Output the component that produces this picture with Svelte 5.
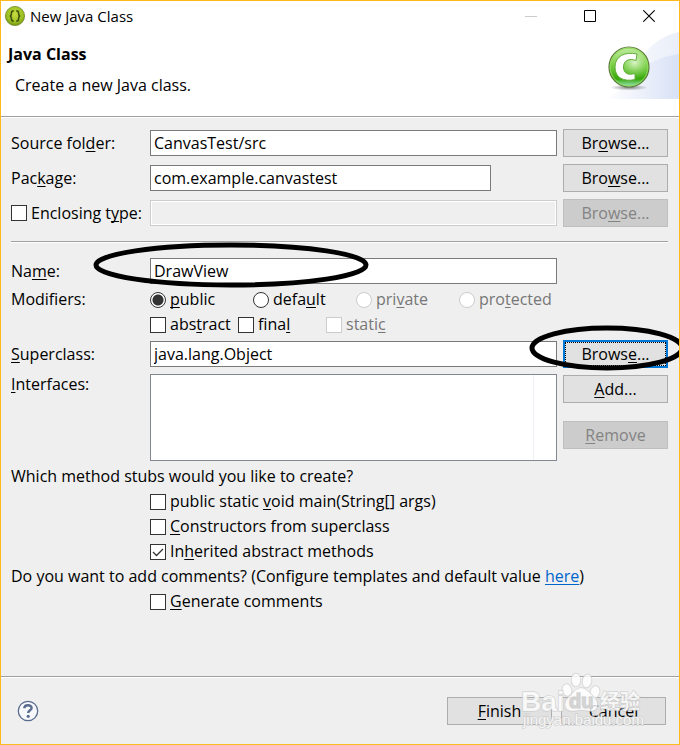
<script lang="ts">
	let name = $state('DrawView');
	let sourceFolder = $state('CanvasTest/src');
	let packageName = $state('com.example.canvastest');
	let superclass = $state('java.lang.Object');
	let access = $state('public');

	const accessModifiers = [
		{ value: 'public', label: '&public' },
		{ value: 'default', label: 'defa&ult' },
		{ value: 'private', label: 'pri&vate', disabled: true },
		{ value: 'protected', label: 'pro&tected', disabled: true }
	];

	let stubs = $state([
		{ id: 'main', label: 'public static &void main(String[] args)', checked: false },
		{ id: 'constructors', label: '&Constructors from superclass', checked: false },
		{ id: 'inherited', label: 'In&herited abstract methods', checked: true }
	]);
</script>

<!-- "&" marks the letter used as keyboard mnemonic -->
{#snippet mnemonic(text: string)}
	{@const at = text.indexOf('&')}
	{#if at < 0}{text}{:else}<span>{text.slice(0, at)}<u>{text[at + 1]}</u>{text.slice(at + 2)}</span>{/if}
{/snippet}

<div class="dialog">
	<div class="titlebar">
		<svg class="app-icon" viewBox="0 0 20 20" aria-hidden="true">
			<defs>
				<radialGradient id="app-green" cx="0.5" cy="0.4" r="0.6">
					<stop offset="0" stop-color="#c9dc40" />
					<stop offset="0.7" stop-color="#9cc022" />
					<stop offset="1" stop-color="#6c9014" />
				</radialGradient>
			</defs>
			<circle cx="10" cy="10" r="9.6" fill="url(#app-green)" stroke="#76882a" stroke-width="0.8" />
			<path
				d="M8.8 4.8C6.9 4.8 6.4 5.5 6.4 7.2S6 9.8 4.8 10c1.2.2 1.6 1.1 1.6 2.8s.5 2.4 2.4 2.4M11.2 4.8c1.9 0 2.4.7 2.4 2.4s.4 2.6 1.6 2.8c-1.2.2-1.6 1.1-1.6 2.8s-.5 2.4-2.4 2.4"
				fill="none"
				stroke="#3f5210"
				stroke-width="1.6"
			/>
		</svg>
		<span class="title">New Java Class</span>
		<div class="window-buttons">
			<button aria-label="Minimize" disabled>
				<svg viewBox="0 0 12 12"><path d="M0 6.5h12" stroke="#ccc" /></svg>
			</button>
			<button aria-label="Maximize">
				<svg viewBox="0 0 12 12"><path d="M.5.5h11v11H.5z" fill="none" stroke="#000" /></svg>
			</button>
			<button aria-label="Close">
				<svg viewBox="0 0 12 12"><path d="M.3.3l11.4 11.4M11.7.3L.3 11.7" stroke="#000" stroke-width="1.1" /></svg>
			</button>
		</div>
	</div>

	<header>
		<div class="heading">
			<h1>Java Class</h1>
			<p>Create a new Java class.</p>
		</div>
		<svg class="banner" viewBox="0 0 74 67" aria-hidden="true">
			<defs>
				<linearGradient id="swoosh">
					<stop offset="0" stop-color="#fff" />
					<stop offset="1" stop-color="#d8e1f5" />
				</linearGradient>
				<linearGradient id="swoosh-back">
					<stop offset="0" stop-color="#fff" />
					<stop offset="1" stop-color="#e9eef9" />
				</linearGradient>
				<linearGradient id="ball" x1="0" y1="0" x2="0" y2="1">
					<stop offset="0" stop-color="#c8eda8" />
					<stop offset="0.45" stop-color="#79cf45" />
					<stop offset="0.8" stop-color="#36a80b" />
					<stop offset="1" stop-color="#a5ead0" />
				</linearGradient>
				<radialGradient id="ball-light" cx="0.65" cy="0.38" r="0.45">
					<stop offset="0" stop-color="#e6f8d8" stop-opacity="0.9" />
					<stop offset="1" stop-color="#8bd85d" stop-opacity="0" />
				</radialGradient>
				<radialGradient id="shadow">
					<stop offset="0" stop-color="#555" stop-opacity="0.7" />
					<stop offset="1" stop-color="#555" stop-opacity="0" />
				</radialGradient>
			</defs>
			<path d="M0 67C30 58 28 10 74 0v67z" fill="url(#swoosh-back)" />
			<path d="M0 67C28 58 26 29 74 22v45z" fill="url(#swoosh)" />
			<ellipse cx="24" cy="55.5" rx="19" ry="3" fill="url(#shadow)" />
			<circle cx="24" cy="35" r="20" fill="url(#ball)" stroke="#5d7a3a" stroke-width="1.2" />
			<circle cx="24" cy="35" r="18.8" fill="url(#ball-light)" stroke="#8fdc5c" stroke-width="1" />
			<path
				d="M32 22l-1 6.500c-7-2.500-12.500 0-12.500 6.500s5 8.500 11.500 6.500v6c-11 2.500-20-1.500-20-12.500S20 19.500 32 22z"
				fill="#fff"
				stroke="#62ad3a"
				stroke-width="1"
			/>
		</svg>
	</header>

	<main>
		<div class="row">
			<label for="source">{@render mnemonic('Source fol&der:')}</label>
			<input id="source" type="text" bind:value={sourceFolder} />
			<button class="btn">{@render mnemonic('Br&owse...')}</button>
		</div>
		<div class="row">
			<label for="package">{@render mnemonic('Pac&kage:')}</label>
			<input id="package" class="short" type="text" bind:value={packageName} />
			<button class="btn">{@render mnemonic('Bro&wse...')}</button>
		</div>
		<div class="row">
			<label class="check"><input type="checkbox" />{@render mnemonic('Enclosing t&ype:')}</label>
			<input type="text" aria-label="Enclosing type" disabled />
			<button class="btn" disabled>{@render mnemonic('Bro&wse...')}</button>
		</div>

		<hr />

		<div class="row name-row">
			<label for="name">{@render mnemonic('Na&me:')}</label>
			<input id="name" type="text" bind:value={name} />
			<svg class="mark mark-name" viewBox="0 0 276 46" aria-hidden="true">
				<ellipse cx="138" cy="23" rx="135" ry="20" />
			</svg>
		</div>

		<div class="modifiers">
			<span class="caption">Modifiers:</span>
			<div class="options">
				<div class="access">
					{#each accessModifiers as mod}
						<label class="check" class:off={mod.disabled}>
							<input type="radio" name="access" value={mod.value} disabled={mod.disabled} bind:group={access} />{@render mnemonic(mod.label)}
						</label>
					{/each}
				</div>
				<div class="flags">
					<label class="check"><input type="checkbox" />{@render mnemonic('abs&tract')}</label>
					<label class="check"><input type="checkbox" />{@render mnemonic('fina&l')}</label>
					<label class="check off"><input type="checkbox" disabled />{@render mnemonic('stati&c')}</label>
				</div>
			</div>
		</div>

		<div class="row super-row">
			<label for="superclass">{@render mnemonic('&Superclass:')}</label>
			<input id="superclass" type="text" bind:value={superclass} />
			<button class="btn focused">{@render mnemonic('Brows&e...')}</button>
			<svg class="mark mark-super" viewBox="0 0 156 46" aria-hidden="true">
				<ellipse cx="78" cy="23" rx="75" ry="20" />
			</svg>
		</div>
		<div class="row list-row">
			<label for="interfaces">{@render mnemonic('&Interfaces:')}</label>
			<select id="interfaces" multiple></select>
			<div class="list-buttons">
				<button class="btn">{@render mnemonic('&Add...')}</button>
				<button class="btn" disabled>{@render mnemonic('&Remove')}</button>
			</div>
		</div>

		<p class="line">Which method stubs would you like to create?</p>
		{#each stubs as stub (stub.id)}
			<label class="check line indent">
				<input type="checkbox" bind:checked={stub.checked} />{@render mnemonic(stub.label)}
			</label>
		{/each}
		<p class="line">Do you want to add comments? (Configure templates and default value <a href="#templates">here</a>)</p>
		<label class="check line indent"><input type="checkbox" />{@render mnemonic('&Generate comments')}</label>
	</main>

	<footer>
		<button class="help" aria-label="Help">
			<svg viewBox="0 0 22 22">
				<circle cx="11" cy="11" r="9.7" fill="#f6f8fb" stroke="#5a6c8d" stroke-width="1.3" />
				<path d="M7.3 8.3C7.4 4.2 14.8 4.3 14.6 8c-.1 2.3-3.4 2.4-3.4 5" fill="none" stroke="#5a6c8d" stroke-width="2.4" />
				<circle cx="11.2" cy="16.3" r="1.6" fill="#5a6c8d" />
			</svg>
		</button>
		<button class="btn">{@render mnemonic('&Finish')}</button>
		<button class="btn">Cancel</button>
		<svg class="watermark" viewBox="0 0 126 60" aria-hidden="true">
			<g class="paw">
				<ellipse cx="46" cy="20" rx="4.5" ry="6" transform="rotate(-12 46 20)" />
				<ellipse cx="55" cy="10" rx="4.5" ry="6.5" />
				<ellipse cx="66" cy="11" rx="4.5" ry="6.5" transform="rotate(10 66 11)" />
				<ellipse cx="74" cy="22" rx="4.5" ry="6" transform="rotate(15 74 22)" />
				<path d="M60 18c-6 0-8 6-12 9-6 5-5 14 3 14 4 0 5-1 9-1s6 1 10 1c8 0 8-9 3-14-4-3-7-9-13-9z" />
			</g>
			<text class="brand" x="0" y="41">Bai</text>
			<text class="du" x="48" y="38">du</text>
			<text class="cn" x="79" y="39">经验</text>
			<text class="url" x="2" y="55">jingyan.baidu.com</text>
		</svg>
	</footer>
</div>

<style>
	:global(body) {
		margin: 0;
	}

	.dialog {
		position: relative;
		box-sizing: border-box;
		min-height: 100vh;
		display: flex;
		flex-direction: column;
		overflow: hidden;
		border: 1px solid #ffb91d;
		background: #efefef;
		color: #000;
		font: 16px/24px 'Open Sans', 'Noto Sans CJK SC', sans-serif;
	}

	button,
	input,
	select {
		font: inherit;
		color: inherit;
		margin: 0;
		box-sizing: border-box;
	}

	u {
		text-decoration-thickness: 1px;
		text-underline-offset: 2px;
		text-decoration-skip-ink: none;
	}

	.titlebar {
		display: flex;
		align-items: center;
		height: 30px;
		padding: 0 1px 0 4px;
		background: #fff;
	}

	.app-icon {
		width: 20px;
		height: 20px;
		margin-right: 5px;
	}

	.title {
		flex: 1;
		font-size: 15px;
	}

	.window-buttons {
		display: flex;
	}

	.window-buttons button {
		display: grid;
		place-items: center;
		width: 59px;
		height: 30px;
		padding: 0;
		border: 0;
		background: none;
	}

	.window-buttons svg {
		width: 12px;
		height: 12px;
	}

	header {
		display: flex;
		justify-content: space-between;
		height: 85px;
		border-bottom: 1px solid #a0a0a0;
		box-shadow: 0 1px #fff;
		background: #fff;
	}

	.heading {
		padding: 11px 7px;
	}

	h1 {
		margin: 0;
		font-size: 16px;
		line-height: 24px;
	}

	.heading p {
		margin: 7px 7px 0;
	}

	.banner {
		width: 74px;
		height: 67px;
		margin-top: 1px;
	}

	main {
		flex: 1;
		padding: 12px 11px 0 10px;
	}

	.row {
		position: relative;
		display: grid;
		grid-template-columns: 139px 1fr 105px;
		align-items: center;
		min-height: 28px;
		margin-bottom: 7px;
	}

	input[type='text'] {
		height: 26px;
		min-width: 0;
		margin-right: 6px;
		padding: 0 3px;
		border: 1px solid #7a7a7a;
		border-radius: 0;
		background: #fff;
		outline: none;
	}

	input[type='text'].short {
		margin-right: 72px;
	}

	input[type='text']:disabled {
		border-color: #ccc;
		background: #efefef;
		box-shadow: inset 0 0 0 1px #fff;
	}

	.btn {
		width: 105px;
		height: 28px;
		padding: 0;
		border: 1px solid #adadad;
		border-radius: 0;
		background: #e1e1e1;
	}

	.btn:disabled {
		border-color: #bfbfbf;
		background: #ccc;
		color: #838383;
	}

	.btn.focused {
		border: 2px solid #0078d7;
		outline: 1px dotted #000;
		outline-offset: -3px;
	}

	.check {
		display: flex;
		align-items: center;
		gap: 4px;
		white-space: nowrap;
	}

	.check.off {
		color: #777;
	}

	input[type='checkbox'],
	input[type='radio'] {
		appearance: none;
		flex: none;
		width: 16px;
		height: 16px;
		border: 1px solid #333;
		background: #fff;
	}

	input[type='radio'] {
		border-radius: 50%;
	}

	input[type='checkbox']:disabled,
	input[type='radio']:disabled {
		border-color: #ccc;
	}

	input[type='radio']:checked {
		background: radial-gradient(circle, #333 5px, #fff 6px);
	}

	input[type='checkbox']:checked {
		background: #fff
			url("data:image/svg+xml,%3Csvg xmlns='http://www.w3.org/2000/svg' viewBox='0 0 14 14'%3E%3Cpath d='M2 7l3.5 3.5L12 4' fill='none' stroke='%23333' stroke-width='1.3'/%3E%3C/svg%3E");
	}

	hr {
		height: 1px;
		margin: 14px 0 15px;
		border: 0;
		background: #a0a0a0;
		box-shadow: 0 1px #fff;
	}

	.name-row {
		margin-bottom: 2px;
	}

	.modifiers {
		display: grid;
		grid-template-columns: 139px 1fr;
		margin-bottom: 3px;
	}

	.caption,
	.access,
	.flags {
		line-height: 25px;
	}

	.access {
		display: grid;
		grid-template-columns: repeat(4, 103px);
	}

	.flags {
		display: grid;
		grid-template-columns: 88px 88px 88px;
	}

	.super-row {
		margin-bottom: 6px;
	}

	.list-row {
		align-items: start;
		margin-bottom: 3px;
	}

	.list-row label {
		line-height: 20px;
	}

	.list-row select {
		height: 87px;
		margin-right: 6px;
		border: 1px solid #828790;
		border-radius: 0;
		outline: none;
		appearance: none;
		background: linear-gradient(#edf0f7, #edf0f7) right 22px top 0 / 1px 100% no-repeat #fff;
	}

	.list-buttons {
		display: grid;
		gap: 18px;
		padding-top: 1px;
	}

	.line {
		margin: 0;
		line-height: 25px;
	}

	.indent {
		margin-left: 139px;
	}

	a {
		color: #0066cc;
		text-decoration-thickness: 1px;
		text-underline-offset: 2px;
	}

	.mark {
		position: absolute;
		fill: none;
		stroke: #000;
		stroke-width: 5px;
		pointer-events: none;
	}

	.mark-name {
		left: 82px;
		top: -15px;
		width: 276px;
		height: 46px;
	}

	.mark-super {
		right: -17px;
		top: -15px;
		width: 156px;
		height: 46px;
	}

	footer {
		position: relative;
		display: flex;
		align-items: center;
		gap: 9px;
		height: 67px;
		padding: 0 13px 0 16px;
		border-top: 1px solid #a0a0a0;
		box-shadow: inset 0 1px #fff;
	}

	.help {
		width: 22px;
		height: 22px;
		margin-right: auto;
		padding: 0;
		border: 0;
		background: none;
	}

	.help svg {
		display: block;
	}

	.watermark {
		position: absolute;
		right: 32px;
		bottom: 14px;
		width: 126px;
		height: 60px;
		overflow: visible;
		pointer-events: none;
		fill: #fff;
		fill-opacity: 0.8;
		stroke: #c8c8c8;
		stroke-width: 1.5px;
		stroke-opacity: 0.7;
		paint-order: stroke;
	}

	.watermark text {
		font-family: 'Liberation Sans', 'Noto Sans CJK SC', sans-serif;
	}

	.brand {
		font-size: 28px;
		font-weight: 700;
	}

	.watermark .du {
		font-size: 20px;
		font-weight: 700;
		fill: #cfcfcf;
	}

	.cn {
		font-size: 20px;
		font-weight: 700;
	}

	.url {
		font-size: 15px;
	}
</style>
